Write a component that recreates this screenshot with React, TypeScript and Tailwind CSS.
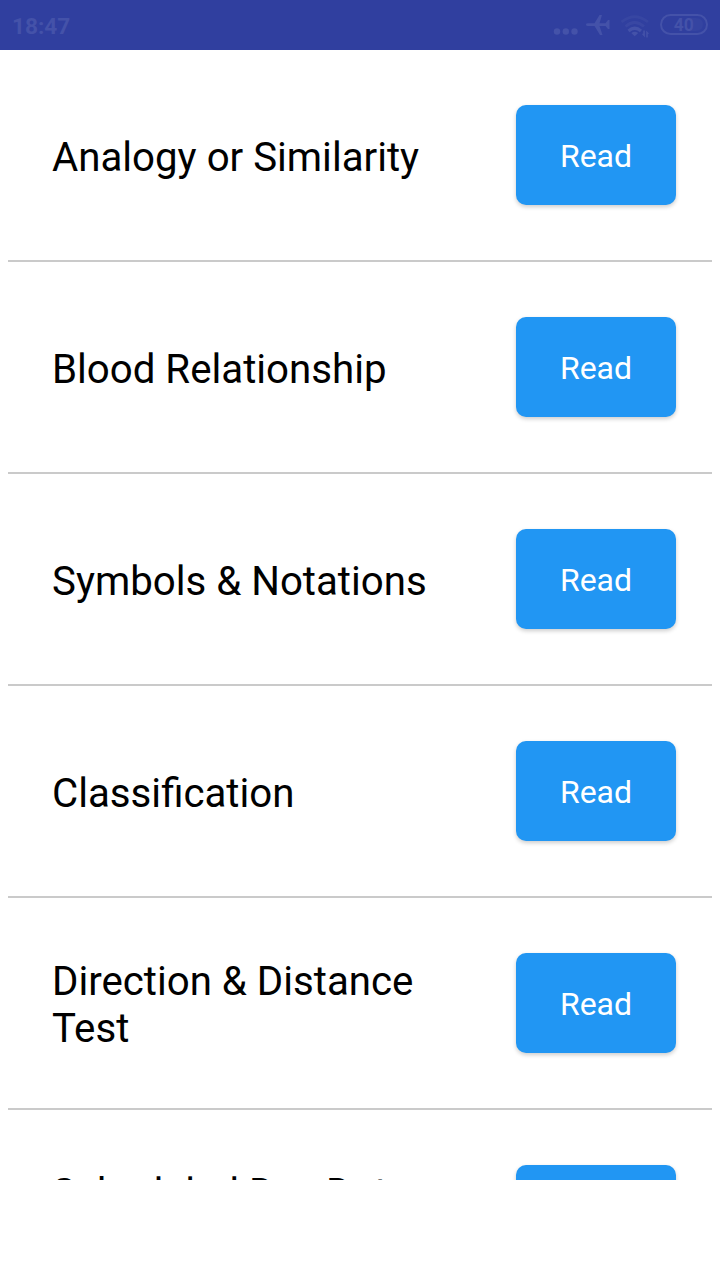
const topics = [
    "Analogy or Similarity",
    "Blood Relationship",
    "Symbols & Notations",
    "Classification",
    "Direction & Distance Test",
    "Scheduled Day Date Problems",
];

function StatusBar() {
    return (
        <header className="flex h-[50px] shrink-0 items-center justify-between bg-[#303f9f] pl-3 pr-3 text-[#4452a9]">
            <span className="text-[22.6px] font-bold leading-[50px] pt-1">18:47</span>
            <svg width="156" height="50" viewBox="552 0 156 50" fill="currentColor">
                <circle cx="557" cy="31.5" r="3.2" />
                <circle cx="565.8" cy="31.5" r="3.2" />
                <circle cx="574.5" cy="31.5" r="3.2" />
                <path d="M586 24.5 Q586 23.2 588 23.2 H594.5 L599.5 15 H602 L599.5 23.2 H605.5 L608 20 H609.5 V29 H608 L605.5 26 H599.5 L602.5 35 H600 L594.5 26 H588 Q586 26 586 24.5Z" />
                <g fill="none" stroke="currentColor" strokeWidth="2.8">
                    <path d="M621.5 22 Q634.7 11.5 648 22" opacity=".35" />
                    <path d="M625.5 26.5 Q634.7 18.5 644 26.5" opacity=".45" />
                    <path d="M628.5 31 Q634.7 25.5 641 31" strokeWidth="3.2" />
                </g>
                <path d="M631.3 33 Q634.7 30.4 638.2 33 L634.7 36.2Z" />
                <path d="M644.9 30.5 V37.5 L641.8 33.8 H643.2 V30.5ZM646.2 37.5 V30.5 L649.2 33.8 H647.8 V37.5Z" />
                <rect x="661" y="15" width="46" height="19" rx="9.5" fill="none" stroke="currentColor" strokeWidth="2" />
                <path d="M691 18 H696 Q703 18 703 24.5 T696 31 H691Z" opacity=".25" />
                <text x="683.8" y="31" fontSize="18" fontWeight="700" textAnchor="middle" textLength="20" lengthAdjust="spacingAndGlyphs">40</text>
            </svg>
        </header>
    );
}

function TopicRow({ title }: { title: string }) {
    return (
        <li className="mx-2 flex h-[212px] items-center justify-between border-b-2 border-[#cacaca] pl-11 pr-9">
            <h2 className="w-[400px] pt-1 text-[40.22px] leading-[47px] text-black">{title}</h2>
            <button className="h-[100px] w-[160px] rounded-[10px] bg-[#2196f3] pt-px text-[32px] text-white shadow-[0_2px_4px_rgba(0,0,0,0.2)]">
                Read
            </button>
        </li>
    );
}

function App() {
    return (
        <div className="flex h-[1280px] w-[720px] flex-col bg-white font-['Roboto',sans-serif]">
            <StatusBar />
            <main className="h-[1130px] shrink-0 overflow-hidden">
                <ul>
                    {topics.map((title) => (
                        <TopicRow key={title} title={title} />
                    ))}
                </ul>
            </main>
        </div>
    );
}

export default App;
